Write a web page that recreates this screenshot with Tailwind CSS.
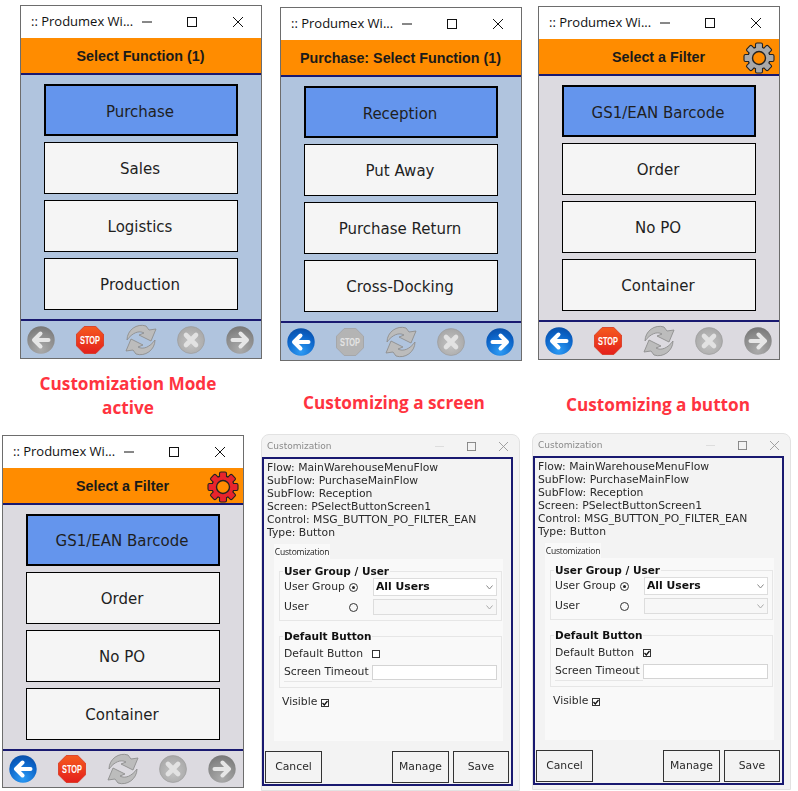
<!DOCTYPE html>
<html lang="en">
<head>
    <meta charset="UTF-8">
    <title>Produmex customization</title>
    <script src="https://cdn.jsdelivr.net/npm/@tailwindcss/browser@4"></script>
</head>
<body class="relative w-[798px] h-[791px] overflow-hidden bg-white font-['Liberation_Sans',sans-serif]">

    <!-- shared icons -->
    <svg class="absolute w-0 h-0">
        <defs>
            <radialGradient id="blue" cx="50%" cy="85%" r="85%"><stop offset="0" stop-color="#2c9bf5"/><stop offset="0.7" stop-color="#0b62c6"/><stop offset="1" stop-color="#0a4fa8"/></radialGradient>
            <radialGradient id="gray" cx="50%" cy="85%" r="85%"><stop offset="0" stop-color="#ababab"/><stop offset="0.7" stop-color="#8a8a8a"/><stop offset="1" stop-color="#777"/></radialGradient>
            <radialGradient id="pale" cx="50%" cy="60%" r="70%"><stop offset="0" stop-color="#c4c4c4"/><stop offset="1" stop-color="#a2a2a2"/></radialGradient>
            <linearGradient id="red" x1="0" y1="0" x2="0" y2="1"><stop offset="0" stop-color="#f55a1e"/><stop offset="1" stop-color="#e4201c"/></linearGradient>
            <symbol id="left-blue" viewBox="0 0 28 28"><circle cx="14" cy="14" r="13.7" fill="url(#blue)"/><path d="M21.5 14H8M13.5 7.5 7 14l6.5 6.5" fill="none" stroke="#fff" stroke-width="4" stroke-linecap="round" stroke-linejoin="round"/></symbol>
            <symbol id="right-blue" viewBox="0 0 28 28"><circle cx="14" cy="14" r="13.7" fill="url(#blue)"/><path d="M6.5 14H20M14.5 7.5 21 14l-6.5 6.5" fill="none" stroke="#fff" stroke-width="4" stroke-linecap="round" stroke-linejoin="round"/></symbol>
            <symbol id="left-gray" viewBox="0 0 28 28"><circle cx="14" cy="14" r="13.7" fill="url(#gray)"/><path d="M21.5 14H8M13.5 7.5 7 14l6.5 6.5" fill="none" stroke="#e6e6e6" stroke-width="4" stroke-linecap="round" stroke-linejoin="round"/></symbol>
            <symbol id="right-gray" viewBox="0 0 28 28"><circle cx="14" cy="14" r="13.7" fill="url(#gray)"/><path d="M6.5 14H20M14.5 7.5 21 14l-6.5 6.5" fill="none" stroke="#e6e6e6" stroke-width="4" stroke-linecap="round" stroke-linejoin="round"/></symbol>
            <symbol id="cancel" viewBox="0 0 28 28"><circle cx="14" cy="14" r="13.5" fill="url(#pale)" stroke="#999" stroke-width="0.6"/><path d="M9 9l10 10M19 9 9 19" stroke="#e2e2e2" stroke-width="4.6" stroke-linecap="round"/></symbol>
            <symbol id="stop-red" viewBox="0 0 28 28"><path d="M8.2 0.5h11.6l7.7 7.7v11.6l-7.7 7.7H8.2L0.5 19.8V8.2Z" fill="url(#red)" stroke="#d8341c" stroke-width="0.8"/><text x="14" y="18" text-anchor="middle" textLength="20" lengthAdjust="spacingAndGlyphs" font-family="Liberation Sans" font-weight="700" font-size="10.5" fill="#fff">STOP</text></symbol>
            <symbol id="stop-gray" viewBox="0 0 28 28"><path d="M8.2 0.5h11.6l7.7 7.7v11.6l-7.7 7.7H8.2L0.5 19.8V8.2Z" fill="#b4b4b4" stroke="#a2a2a2" stroke-width="0.8"/><text x="14" y="18" text-anchor="middle" textLength="20" lengthAdjust="spacingAndGlyphs" font-family="Liberation Sans" font-weight="700" font-size="10.5" fill="#e4e4e4">STOP</text></symbol>
            <symbol id="refresh" viewBox="0 0 32 32"><g fill="#bcbcbc" stroke="#8e8e8e" stroke-width="0.9" stroke-linejoin="round"><path d="M2 16C2 6 12 -1 21 2l3 4 7-1-5 12-12-6 5-2C14 6 7 9 2 16Z"/><path d="M2 16C2 6 12 -1 21 2l3 4 7-1-5 12-12-6 5-2C14 6 7 9 2 16Z" transform="rotate(180 16 16)"/></g></symbol>
            <symbol id="gear" viewBox="0 0 32 32">
                <circle cx="16" cy="16" r="11" stroke="#222" stroke-width="1.4"/>
                <g stroke="#222" stroke-width="1.1">
                    <rect x="12.5" y="1" width="7" height="8" rx="1.5"/>
                    <rect x="12.5" y="1" width="7" height="8" rx="1.5" transform="rotate(45 16 16)"/>
                    <rect x="12.5" y="1" width="7" height="8" rx="1.5" transform="rotate(90 16 16)"/>
                    <rect x="12.5" y="1" width="7" height="8" rx="1.5" transform="rotate(135 16 16)"/>
                    <rect x="12.5" y="1" width="7" height="8" rx="1.5" transform="rotate(180 16 16)"/>
                    <rect x="12.5" y="1" width="7" height="8" rx="1.5" transform="rotate(225 16 16)"/>
                    <rect x="12.5" y="1" width="7" height="8" rx="1.5" transform="rotate(270 16 16)"/>
                    <rect x="12.5" y="1" width="7" height="8" rx="1.5" transform="rotate(315 16 16)"/>
                </g>
                <circle cx="16" cy="16" r="10.5" stroke="none"/>
                <circle cx="16" cy="16" r="6.5" fill="#ff8c00" stroke="#222" stroke-width="1.4"/>
            </symbol>
            <symbol id="win-min" viewBox="0 0 10 10"><path d="M0 5h10" stroke="#111" stroke-width="1"/></symbol>
            <symbol id="win-max" viewBox="0 0 10 10"><rect x="0.5" y="0.5" width="9" height="9" fill="none" stroke="#111"/></symbol>
            <symbol id="win-close" viewBox="0 0 10 10"><path d="M0 0l10 10M10 0 0 10" stroke="#111" stroke-width="1"/></symbol>
        </defs>
    </svg>

    <!-- Window 1 -->
    <section class="absolute left-[20px] top-[5px] w-[242px] h-[354px] flex flex-col border border-[#6d6d6d] bg-[#b0c4de]">
        <div class="h-[32px] shrink-0 bg-white flex items-center pl-[10px] text-[13px] text-[#111] font-['Open_Sans',sans-serif]">
            <span class="w-[111px]">:: Produmex Wi...</span>
            <svg class="w-[10px] h-[10px]"><use href="#win-min"/></svg>
            <svg class="w-[10px] h-[10px] ml-[35px]"><use href="#win-max"/></svg>
            <svg class="w-[10px] h-[10px] ml-[36px]"><use href="#win-close"/></svg>
        </div>
        <div class="h-[37px] shrink-0 bg-[#ff8c00] border-b-2 border-[#191970] flex items-center justify-center pt-[2px] pr-[1px] text-[14.3px] font-bold text-[#1a1a1a]">Select Function (1)</div>
        <div class="flex-1 flex flex-col gap-[6px] pt-[9px] px-[23px] font-['DejaVu_Sans',sans-serif] text-[15px] text-[#1f1f1f]">
            <div class="h-[52px] flex items-center justify-center pt-[4px] pr-[2px] bg-[#6495ed] border-2 border-black">Purchase</div>
            <div class="h-[52px] flex items-center justify-center pt-[2px] pr-[2px] bg-[#f5f5f5] border border-black">Sales</div>
            <div class="h-[52px] flex items-center justify-center pt-[2px] pr-[2px] bg-[#f5f5f5] border border-black">Logistics</div>
            <div class="h-[52px] flex items-center justify-center pt-[2px] pr-[2px] bg-[#f5f5f5] border border-black">Production</div>
        </div>
        <div class="h-[39px] shrink-0 border-t-2 border-[#191970] flex items-center justify-between pl-[6px] pr-[7px]">
            <svg class="w-[28px] h-[28px]"><use href="#left-gray"/></svg>
            <svg class="w-[28px] h-[28px]"><use href="#stop-red"/></svg>
            <svg class="w-[32px] h-[32px]"><use href="#refresh"/></svg>
            <svg class="w-[28px] h-[28px]"><use href="#cancel"/></svg>
            <svg class="w-[28px] h-[28px]"><use href="#right-gray"/></svg>
        </div>
    </section>

    <!-- Window 2 -->
    <section class="absolute left-[280px] top-[7px] w-[242px] h-[354px] flex flex-col border border-[#6d6d6d] bg-[#b0c4de]">
        <div class="h-[32px] shrink-0 bg-white flex items-center pl-[10px] text-[13px] text-[#111] font-['Open_Sans',sans-serif]">
            <span class="w-[111px]">:: Produmex Wi...</span>
            <svg class="w-[10px] h-[10px]"><use href="#win-min"/></svg>
            <svg class="w-[10px] h-[10px] ml-[35px]"><use href="#win-max"/></svg>
            <svg class="w-[10px] h-[10px] ml-[36px]"><use href="#win-close"/></svg>
        </div>
        <div class="h-[37px] shrink-0 bg-[#ff8c00] border-b-2 border-[#191970] flex items-center justify-center pt-[2px] pr-[1px] text-[14.3px] font-bold text-[#1a1a1a]">Purchase: Select Function (1)</div>
        <div class="flex-1 flex flex-col gap-[6px] pt-[9px] px-[23px] font-['DejaVu_Sans',sans-serif] text-[15px] text-[#1f1f1f]">
            <div class="h-[52px] flex items-center justify-center pt-[4px] pr-[2px] bg-[#6495ed] border-2 border-black">Reception</div>
            <div class="h-[52px] flex items-center justify-center pt-[2px] pr-[2px] bg-[#f5f5f5] border border-black">Put Away</div>
            <div class="h-[52px] flex items-center justify-center pt-[2px] pr-[2px] bg-[#f5f5f5] border border-black">Purchase Return</div>
            <div class="h-[52px] flex items-center justify-center pt-[2px] pr-[2px] bg-[#f5f5f5] border border-black">Cross-Docking</div>
        </div>
        <div class="h-[39px] shrink-0 border-t-2 border-[#191970] flex items-center justify-between pl-[6px] pr-[7px]">
            <svg class="w-[28px] h-[28px]"><use href="#left-blue"/></svg>
            <svg class="w-[28px] h-[28px]"><use href="#stop-gray"/></svg>
            <svg class="w-[32px] h-[32px]"><use href="#refresh"/></svg>
            <svg class="w-[28px] h-[28px]"><use href="#cancel"/></svg>
            <svg class="w-[28px] h-[28px]"><use href="#right-blue"/></svg>
        </div>
    </section>

    <!-- Window 3 -->
    <section class="absolute left-[538px] top-[6px] w-[242px] h-[354px] flex flex-col border border-[#6d6d6d] bg-[#dcdae0]">
        <div class="h-[32px] shrink-0 bg-white flex items-center pl-[10px] text-[13px] text-[#111] font-['Open_Sans',sans-serif]">
            <span class="w-[111px]">:: Produmex Wi...</span>
            <svg class="w-[10px] h-[10px]"><use href="#win-min"/></svg>
            <svg class="w-[10px] h-[10px] ml-[35px]"><use href="#win-max"/></svg>
            <svg class="w-[10px] h-[10px] ml-[36px]"><use href="#win-close"/></svg>
        </div>
        <div class="relative h-[37px] shrink-0 bg-[#ff8c00] border-b-2 border-[#191970] flex items-center justify-center pt-[2px] pr-[1px] text-[14.3px] font-bold text-[#1a1a1a]">
            Select a Filter
            <svg class="absolute right-[4px] top-[3px] w-[32px] h-[32px] text-[#a9a9a9] fill-current"><use href="#gear"/></svg>
        </div>
        <div class="flex-1 flex flex-col gap-[6px] pt-[9px] px-[23px] font-['DejaVu_Sans',sans-serif] text-[15px] text-[#1f1f1f]">
            <div class="h-[52px] flex items-center justify-center pt-[4px] pr-[2px] bg-[#6495ed] border-2 border-black">GS1/EAN Barcode</div>
            <div class="h-[52px] flex items-center justify-center pt-[2px] pr-[2px] bg-[#f5f5f5] border border-black">Order</div>
            <div class="h-[52px] flex items-center justify-center pt-[2px] pr-[2px] bg-[#f5f5f5] border border-black">No PO</div>
            <div class="h-[52px] flex items-center justify-center pt-[2px] pr-[2px] bg-[#f5f5f5] border border-black">Container</div>
        </div>
        <div class="h-[39px] shrink-0 border-t-2 border-[#191970] flex items-center justify-between pl-[6px] pr-[7px]">
            <svg class="w-[28px] h-[28px]"><use href="#left-blue"/></svg>
            <svg class="w-[28px] h-[28px]"><use href="#stop-red"/></svg>
            <svg class="w-[32px] h-[32px]"><use href="#refresh"/></svg>
            <svg class="w-[28px] h-[28px]"><use href="#cancel"/></svg>
            <svg class="w-[28px] h-[28px]"><use href="#right-gray"/></svg>
        </div>
    </section>

    <!-- Window 4 -->
    <section class="absolute left-[2px] top-[435px] w-[242px] h-[353px] flex flex-col border border-[#6d6d6d] bg-[#dcdae0]">
        <div class="h-[32px] shrink-0 bg-white flex items-center pl-[10px] text-[13px] text-[#111] font-['Open_Sans',sans-serif]">
            <span class="w-[111px]">:: Produmex Wi...</span>
            <svg class="w-[10px] h-[10px]"><use href="#win-min"/></svg>
            <svg class="w-[10px] h-[10px] ml-[35px]"><use href="#win-max"/></svg>
            <svg class="w-[10px] h-[10px] ml-[36px]"><use href="#win-close"/></svg>
        </div>
        <div class="relative h-[37px] shrink-0 bg-[#ff8c00] border-b-2 border-[#191970] flex items-center justify-center pt-[2px] pr-[1px] text-[14.3px] font-bold text-[#1a1a1a]">
            Select a Filter
            <svg class="absolute right-[4px] top-[3px] w-[32px] h-[32px] text-[#e8242c] fill-current"><use href="#gear"/></svg>
        </div>
        <div class="flex-1 flex flex-col gap-[6px] pt-[9px] px-[23px] font-['DejaVu_Sans',sans-serif] text-[15px] text-[#1f1f1f]">
            <div class="h-[52px] flex items-center justify-center pt-[2px] pr-[2px] bg-[#6495ed] border-2 border-black">GS1/EAN Barcode</div>
            <div class="h-[52px] flex items-center justify-center pt-[2px] pr-[2px] bg-[#f5f5f5] border border-black">Order</div>
            <div class="h-[52px] flex items-center justify-center pt-[2px] pr-[2px] bg-[#f5f5f5] border border-black">No PO</div>
            <div class="h-[52px] flex items-center justify-center pt-[2px] pr-[2px] bg-[#f5f5f5] border border-black">Container</div>
        </div>
        <div class="h-[38px] shrink-0 border-t-2 border-[#191970] flex items-center justify-between pl-[6px] pr-[7px]">
            <svg class="w-[28px] h-[28px]"><use href="#left-blue"/></svg>
            <svg class="w-[28px] h-[28px]"><use href="#stop-red"/></svg>
            <svg class="w-[32px] h-[32px]"><use href="#refresh"/></svg>
            <svg class="w-[28px] h-[28px]"><use href="#cancel"/></svg>
            <svg class="w-[28px] h-[28px]"><use href="#right-gray"/></svg>
        </div>
    </section>

    <!-- Captions -->
    <p class="absolute left-[8px] top-[372px] w-[240px] text-center text-[17.2px] leading-[24px] font-bold text-[#ff3340] font-['Open_Sans',sans-serif]">Customization Mode<br>active</p>
    <p class="absolute left-[274px] top-[391px] w-[240px] text-center text-[17.2px] leading-[24px] font-bold text-[#ff3340] font-['Open_Sans',sans-serif]">Customizing a screen</p>
    <p class="absolute left-[538px] top-[393px] w-[240px] text-center text-[17.2px] leading-[24px] font-bold text-[#ff3340] font-['Open_Sans',sans-serif]">Customizing a button</p>

    <!-- Dialog 1 -->
    <section class="absolute left-[261px] top-[434px] w-[259px] h-[357px] flex flex-col rounded-t-lg border border-[#e2e2e2] bg-[#f3f3f3] font-['DejaVu_Sans',sans-serif] text-[10.8px] text-[#2a2a2a] blur-[0.3px]">
        <div class="h-[22px] shrink-0 flex items-center pl-[5px] pt-[1px] text-[9px] text-[#8a8a8a]">
            <span class="w-[168px]">Customization</span>
            <svg class="w-[9px] h-[9px] opacity-10"><use href="#win-min"/></svg>
            <svg class="w-[9px] h-[9px] ml-[23px] opacity-50"><use href="#win-max"/></svg>
            <svg class="w-[9px] h-[9px] ml-[23px] opacity-40"><use href="#win-close"/></svg>
        </div>
        <div class="w-[251px] h-[329px] flex flex-col border-2 border-[#191970] pt-[3px] px-[3px]">
            <div class="leading-[12.9px]">
                <p>Flow: MainWarehouseMenuFlow</p>
                <p>SubFlow: PurchaseMainFlow</p>
                <p>SubFlow: Reception</p>
                <p>Screen: PSelectButtonScreen1</p>
                <p>Control: MSG_BUTTON_PO_FILTER_EAN</p>
                <p>Type: Button</p>
            </div>
            <div class="ml-[7px] mt-[5px] w-[56px] h-[15px] bg-[#f9f9f9] flex items-center justify-center text-[8.5px] text-[#222] font-['Open_Sans',sans-serif] tracking-[-0.2px]">Customization</div>
            <div class="ml-[7px] w-[229px] h-[182px] bg-[#f9f9f9] px-[5px] pt-[6px]">
                <fieldset class="border border-[#e6e6e6] h-[56px] px-[4px]">
                    <legend class="font-bold text-[10.5px] leading-[13px] -ml-[1px] px-[1px] text-[#111]">User Group / User</legend>
                    <div class="flex items-center h-[20px] -mt-[1px]">
                        <span class="w-[65px] shrink-0">User Group</span>
                        <span class="w-[9px] h-[9px] shrink-0 rounded-full border border-[#333] flex items-center justify-center"><span class="w-[3px] h-[3px] rounded-full bg-[#222]"></span></span>
                        <div class="ml-[15px] w-[124px] h-[18px] bg-white border border-[#ddd] flex items-center justify-between pl-[2px] pr-[3px] font-bold text-[#111]"><span>All Users</span><svg class="w-[7px] h-[5px]" viewBox="0 0 7 5"><path d="M0.5 0.5 3.5 4l3-3.5" fill="none" stroke="#888"/></svg></div>
                    </div>
                    <div class="flex items-center h-[20px]">
                        <span class="w-[65px] shrink-0">User</span>
                        <span class="w-[9px] h-[9px] shrink-0 rounded-full border border-[#333]"></span>
                        <div class="ml-[15px] w-[124px] h-[16px] bg-[#f7f7f7] border border-[#ddd] flex items-center justify-end pr-[3px]"><svg class="w-[7px] h-[5px]" viewBox="0 0 7 5"><path d="M0.5 0.5 3.5 4l3-3.5" fill="none" stroke="#aaa"/></svg></div>
                    </div>
                </fieldset>
                <fieldset class="mt-[9px] border border-[#e6e6e6] h-[58px] px-[4px]">
                    <legend class="font-bold text-[10.5px] leading-[13px] -ml-[1px] px-[1px] text-[#111]">Default Button</legend>
                    <div class="flex items-center h-[19px] mt-[1px]">
                        <span class="w-[88px] shrink-0">Default Button</span>
                        <span class="w-[8px] h-[8px] border border-[#333] bg-white"></span>
                    </div>
                    <div class="flex items-center h-[19px]">
                        <span class="w-[88px] shrink-0 border-b border-[#e6e6e6]">Screen Timeout</span>
                        <div class="w-[125px] h-[15px] bg-white border border-[#d4d4d4]"></div>
                    </div>
                </fieldset>
                <div class="flex items-center gap-[4px] mt-[6px] ml-[3px]">
                    <span>Visible</span>
                    <span class="w-[8px] h-[8px] border border-[#333] bg-white flex items-center justify-center"><svg class="w-[6px] h-[6px]" viewBox="0 0 6 6"><path d="M0.5 3 2.3 5 5.5 1" fill="none" stroke="#111" stroke-width="1.3"/></svg></span>
                </div>
            </div>
            <div class="flex -ml-[2px] mt-[10px]">
                <div class="w-[57px] h-[32px] shrink-0 border border-[#333] flex items-center justify-center">Cancel</div>
                <div class="w-[57px] h-[32px] shrink-0 ml-[70px] border border-[#333] flex items-center justify-center">Manage</div>
                <div class="w-[56px] h-[32px] shrink-0 ml-[4px] border border-[#333] flex items-center justify-center">Save</div>
            </div>
        </div>
    </section>

    <!-- Dialog 2 -->
    <section class="absolute left-[532px] top-[433px] w-[259px] h-[357px] flex flex-col rounded-t-lg border border-[#e2e2e2] bg-[#f3f3f3] font-['DejaVu_Sans',sans-serif] text-[10.8px] text-[#2a2a2a] blur-[0.3px]">
        <div class="h-[22px] shrink-0 flex items-center pl-[5px] pt-[1px] text-[9px] text-[#8a8a8a]">
            <span class="w-[168px]">Customization</span>
            <svg class="w-[9px] h-[9px] opacity-10"><use href="#win-min"/></svg>
            <svg class="w-[9px] h-[9px] ml-[23px] opacity-50"><use href="#win-max"/></svg>
            <svg class="w-[9px] h-[9px] ml-[23px] opacity-40"><use href="#win-close"/></svg>
        </div>
        <div class="w-[251px] h-[329px] flex flex-col border-2 border-[#191970] pt-[3px] px-[3px]">
            <div class="leading-[12.9px]">
                <p>Flow: MainWarehouseMenuFlow</p>
                <p>SubFlow: PurchaseMainFlow</p>
                <p>SubFlow: Reception</p>
                <p>Screen: PSelectButtonScreen1</p>
                <p>Control: MSG_BUTTON_PO_FILTER_EAN</p>
                <p>Type: Button</p>
            </div>
            <div class="ml-[7px] mt-[5px] w-[56px] h-[15px] bg-[#f9f9f9] flex items-center justify-center text-[8.5px] text-[#222] font-['Open_Sans',sans-serif] tracking-[-0.2px]">Customization</div>
            <div class="ml-[7px] w-[229px] h-[182px] bg-[#f9f9f9] px-[5px] pt-[6px]">
                <fieldset class="border border-[#e6e6e6] h-[56px] px-[4px]">
                    <legend class="font-bold text-[10.5px] leading-[13px] -ml-[1px] px-[1px] text-[#111]">User Group / User</legend>
                    <div class="flex items-center h-[20px] -mt-[1px]">
                        <span class="w-[65px] shrink-0">User Group</span>
                        <span class="w-[9px] h-[9px] shrink-0 rounded-full border border-[#333] flex items-center justify-center"><span class="w-[3px] h-[3px] rounded-full bg-[#222]"></span></span>
                        <div class="ml-[15px] w-[124px] h-[18px] bg-white border border-[#ddd] flex items-center justify-between pl-[2px] pr-[3px] font-bold text-[#111]"><span>All Users</span><svg class="w-[7px] h-[5px]" viewBox="0 0 7 5"><path d="M0.5 0.5 3.5 4l3-3.5" fill="none" stroke="#888"/></svg></div>
                    </div>
                    <div class="flex items-center h-[20px]">
                        <span class="w-[65px] shrink-0">User</span>
                        <span class="w-[9px] h-[9px] shrink-0 rounded-full border border-[#333]"></span>
                        <div class="ml-[15px] w-[124px] h-[16px] bg-[#f7f7f7] border border-[#ddd] flex items-center justify-end pr-[3px]"><svg class="w-[7px] h-[5px]" viewBox="0 0 7 5"><path d="M0.5 0.5 3.5 4l3-3.5" fill="none" stroke="#aaa"/></svg></div>
                    </div>
                </fieldset>
                <fieldset class="mt-[9px] border border-[#e6e6e6] h-[58px] px-[4px]">
                    <legend class="font-bold text-[10.5px] leading-[13px] -ml-[1px] px-[1px] text-[#111]">Default Button</legend>
                    <div class="flex items-center h-[19px] mt-[1px]">
                        <span class="w-[88px] shrink-0">Default Button</span>
                        <span class="w-[8px] h-[8px] border border-[#333] bg-white flex items-center justify-center"><svg class="w-[6px] h-[6px]" viewBox="0 0 6 6"><path d="M0.5 3 2.3 5 5.5 1" fill="none" stroke="#111" stroke-width="1.3"/></svg></span>
                    </div>
                    <div class="flex items-center h-[19px]">
                        <span class="w-[88px] shrink-0 border-b border-[#e6e6e6]">Screen Timeout</span>
                        <div class="w-[125px] h-[15px] bg-white border border-[#d4d4d4]"></div>
                    </div>
                </fieldset>
                <div class="flex items-center gap-[4px] mt-[6px] ml-[3px]">
                    <span>Visible</span>
                    <span class="w-[8px] h-[8px] border border-[#333] bg-white flex items-center justify-center"><svg class="w-[6px] h-[6px]" viewBox="0 0 6 6"><path d="M0.5 3 2.3 5 5.5 1" fill="none" stroke="#111" stroke-width="1.3"/></svg></span>
                </div>
            </div>
            <div class="flex -ml-[2px] mt-[10px]">
                <div class="w-[57px] h-[32px] shrink-0 border border-[#333] flex items-center justify-center">Cancel</div>
                <div class="w-[57px] h-[32px] shrink-0 ml-[70px] border border-[#333] flex items-center justify-center">Manage</div>
                <div class="w-[56px] h-[32px] shrink-0 ml-[4px] border border-[#333] flex items-center justify-center">Save</div>
            </div>
        </div>
    </section>

</body>
</html>
